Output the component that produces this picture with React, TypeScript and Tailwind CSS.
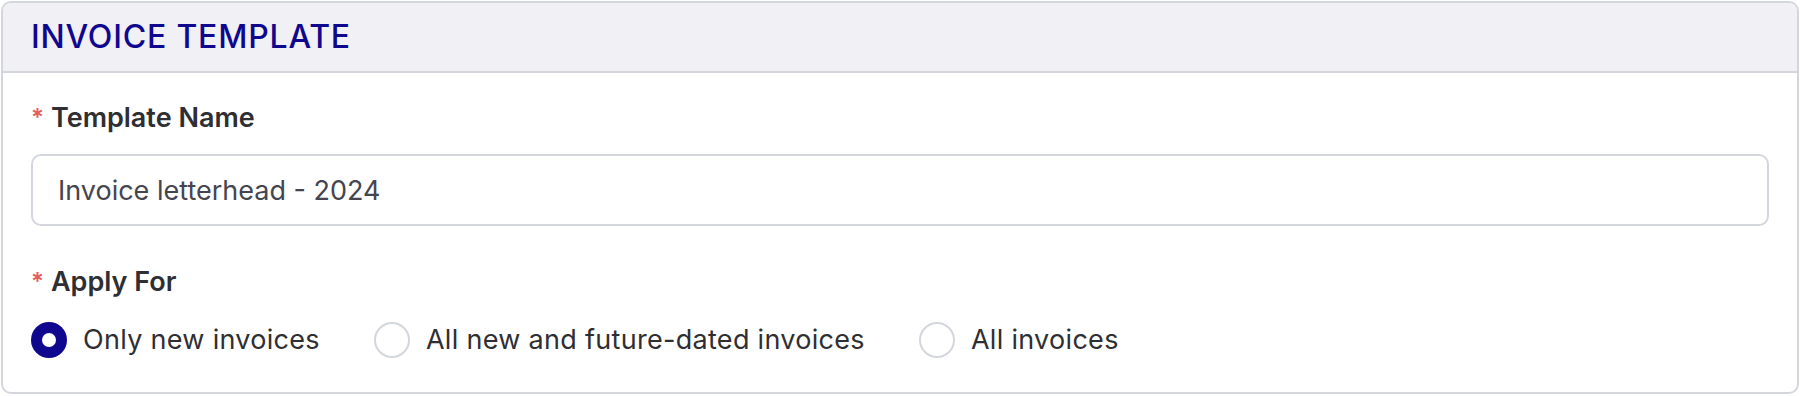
import { useState } from "react";

const OPTIONS = [
  "Only new invoices",
  "All new and future-dated invoices",
  "All invoices",
];

function Label({ children }: { children: string }) {
  return (
    <div className="flex items-center gap-[7px] text-[27px] leading-8 font-semibold text-[#2f2f33]">
      <span className="text-[24px] text-[#e35d5d]">*</span>
      {children}
    </div>
  );
}

export default function App() {
  const [applyFor, setApplyFor] = useState(0);
  const [name, setName] = useState("Invoice letterhead - 2024");

  return (
    <div className="bg-white p-px font-['Inter',sans-serif]">
      <div className="overflow-hidden rounded-[10px] border-2 border-[#d3d6dd] bg-white">
        {/* Header */}
        <div className="flex h-[70px] items-center border-b-2 border-[#d3d6dd] bg-[#f0f0f5] px-[28px]">
          <h1 className="text-[32px] leading-9 font-medium tracking-[0.8px] text-[#10078f]">
            INVOICE TEMPLATE
          </h1>
        </div>

        {/* Body */}
        <div className="px-[28px] pt-[29px] pb-[34px]">
          <Label>Template Name</Label>
          <input
            value={name}
            onChange={(e) => setName(e.target.value)}
            className="mt-5 h-[72px] w-full rounded-[10px] border-2 border-[#d3d6dd] bg-white px-[25px] text-[27px] text-[#45454f] outline-none"
          />

          <div className="mt-10">
            <Label>Apply For</Label>
          </div>
          <div className="mt-6 flex items-center gap-[54px]">
            {OPTIONS.map((opt, i) => (
              <button
                key={opt}
                type="button"
                onClick={() => setApplyFor(i)}
                className="flex items-center gap-4 text-[27px] leading-9 tracking-[0.3px] text-[#2f2f33]"
              >
                {applyFor === i ? (
                  <span className="flex h-9 w-9 items-center justify-center rounded-full bg-[#10078f]">
                    <span className="h-3.5 w-3.5 rounded-full bg-white" />
                  </span>
                ) : (
                  <span className="h-9 w-9 rounded-full border-2 border-[#d3d6dd] bg-white" />
                )}
                {opt}
              </button>
            ))}
          </div>
        </div>
      </div>
    </div>
  );
}
